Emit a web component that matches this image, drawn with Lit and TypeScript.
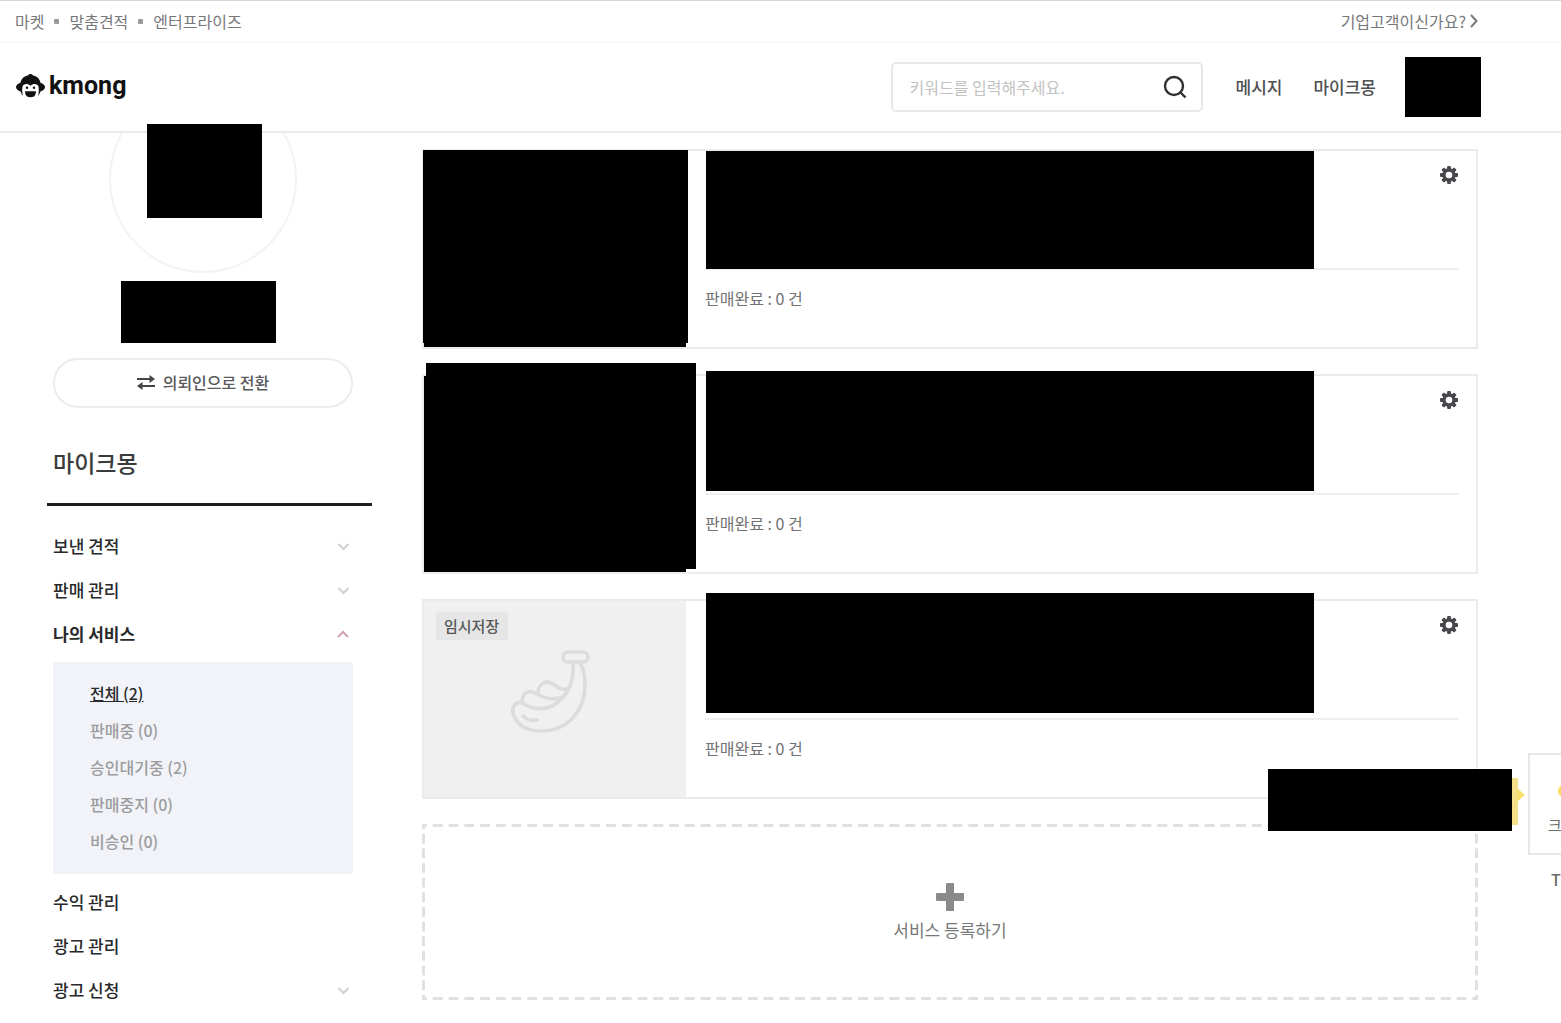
import { LitElement, html, css, svg, nothing } from "lit";
import { customElement, property } from "lit/decorators.js";

interface MenuEntry {
  label: string;
  state: "closed" | "open" | "leaf";
}

const MENU_TOP: MenuEntry[] = [
  { label: "보낸 견적", state: "closed" },
  { label: "판매 관리", state: "closed" },
  { label: "나의 서비스", state: "open" },
];

const SUBMENU = ["전체 (2)", "판매중 (0)", "승인대기중 (2)", "판매중지 (0)", "비승인 (0)"];

const MENU_BOTTOM: MenuEntry[] = [
  { label: "수익 관리", state: "leaf" },
  { label: "광고 관리", state: "leaf" },
  { label: "광고 신청", state: "closed" },
];

const GEAR_TEETH = [0, 45, 90, 135, 180, 225, 270, 315];

@customElement("kmong-header")
class KmongHeader extends LitElement {
  static styles = css`
    :host { display: block; }
    a { color: inherit; text-decoration: none; }
    .topbar {
      display: flex;
      justify-content: space-between;
      align-items: center;
      height: 40px;
      padding: 0 83px 0 15px;
      border-top: 1px solid #d6d6d6;
      border-bottom: 2px solid #f8f8f8;
      font-size: 16px;
      color: #77787a;
    }
    .markets { display: flex; align-items: center; gap: 10px; }
    .dot { width: 5px; height: 5px; border-radius: 1px; background: #9a9a9a; }
    .business { display: flex; align-items: center; gap: 4px; }
    .bar {
      display: flex;
      align-items: center;
      height: 88px;
      padding: 0 80px 0 16px;
      border-bottom: 2px solid #ebebeb;
    }
    .logo {
      display: flex;
      align-items: center;
      gap: 4px;
      margin-right: auto;
      padding-bottom: 2px;
      color: #111;
      font: 700 25px/32px Roboto, "Noto Sans", sans-serif;
    }
    .search {
      display: flex;
      align-items: center;
      box-sizing: border-box;
      width: 312px;
      height: 50px;
      padding: 0 14px 0 17px;
      border: 2px solid #e8e8e8;
      border-radius: 5px;
    }
    .search input {
      flex: 1;
      min-width: 0;
      padding: 0;
      border: 0;
      outline: 0;
      background: none;
      font: inherit;
      font-size: 16px;
    }
    .search input::placeholder { color: #c2c2c2; opacity: 1; }
    .search button { display: flex; padding: 0; border: 0; background: none; }
    .links {
      display: flex;
      gap: 31px;
      margin: 0 29px 0 33px;
      font-size: 17px;
      font-weight: 500;
      color: #505153;
    }
    .account { width: 76px; height: 60px; background: #000; }
  `;

  render() {
    return html`
      <nav class="topbar">
        <div class="markets">
          <a href="#">마켓</a><span class="dot"></span>
          <a href="#">맞춤견적</a><span class="dot"></span>
          <a href="#">엔터프라이즈</a>
        </div>
        <a class="business" href="#">기업고객이신가요?
          <svg width="8" height="14" viewBox="0 0 8 14" fill="none" stroke="#77787a" stroke-width="2"><path d="M1 1l5.500 6L1 13" /></svg>
        </a>
      </nav>
      <header class="bar">
        <a class="logo" href="#">
          <svg width="29" height="24" viewBox="0 0 29 24">
            <path fill="#111" d="M14.500 0c1.200 0 2 .6 2.300 1.300 4 .8 6.900 3.500 7.700 7.400C27 9.500 29 11 29 13s-2 3.700-4.600 4.500c-.5 1.700-1.200 3-2.400 4.200C23 19 23 15.500 22.500 12.500c-.7-3.200-5.500-3.500-8-.7-2.500-2.800-7.300-2.500-8 .7C6 15.500 6 19 7 21.700c-1.200-1.200-1.900-2.500-2.400-4.200C2 16.700 0 15 0 13s2-3.500 4.500-4.300c.8-3.900 3.700-6.600 7.700-7.400C12.500.6 13.300 0 14.500 0z" />
            <circle fill="#111" cx="11" cy="13.800" r="1.200" />
            <circle fill="#111" cx="18" cy="13.800" r="1.200" />
            <path fill="#111" d="M9 17.200h11c0 2.200-.8 4-2 5.300-2 .9-5 .9-7 0-1.200-1.300-2-3.100-2-5.300z" />
          </svg>
          <span>kmong</span>
        </a>
        <form class="search" role="search">
          <input type="search" aria-label="검색" placeholder="키워드를 입력해주세요." />
          <button type="button" aria-label="검색">
            <svg width="24" height="24" viewBox="0 0 24 24" fill="none" stroke="#303133" stroke-width="2.400"><circle cx="11" cy="11" r="9" /><path d="M17.500 17.500l5 5" /></svg>
          </button>
        </form>
        <nav class="links"><a href="#">메시지</a><a href="#">마이크몽</a></nav>
        <div class="account"></div>
      </header>
    `;
  }
}

@customElement("kmong-sidebar")
class KmongSidebar extends LitElement {
  static styles = css`
    :host { display: block; }
    a { color: inherit; text-decoration: none; }
    .inner { padding: 0 19px 0 6px; }
    .profile {
      position: relative;
      display: flex;
      flex-direction: column;
      align-items: center;
    }
    .avatar-window {
      display: flex;
      align-items: flex-end;
      height: 140px;
      overflow: hidden;
    }
    .avatar {
      box-sizing: border-box;
      width: 188px;
      height: 188px;
      flex: none;
      border: 2px solid #f3f3f3;
      border-radius: 50%;
    }
    .photo {
      position: absolute;
      top: -9px;
      left: 100px;
      width: 115px;
      height: 94px;
      background: #000;
    }
    .name { width: 155px; height: 62px; margin: 8px 9px 15px 0; background: #000; }
    .switch {
      display: flex;
      justify-content: center;
      align-items: center;
      gap: 8px;
      box-sizing: border-box;
      width: 100%;
      height: 50px;
      padding: 0 0 2px;
      border: 2px solid #ececec;
      border-radius: 25px;
      background: #fff;
      font: inherit;
      font-size: 16px;
      font-weight: 500;
      color: #58595b;
    }
    .title {
      margin: 36px 0 0;
      padding: 0 6px 23px;
      border-bottom: 3px solid #1d1d1f;
      font-size: 23px;
      line-height: 36px;
      font-weight: 500;
      color: #3a3b3d;
    }
    .menu { padding-top: 18px; }
    .row {
      display: flex;
      justify-content: space-between;
      align-items: center;
      height: 44px;
      padding-right: 3px;
      font-size: 17px;
      font-weight: 500;
      color: #28292b;
    }
    .row.open { font-weight: 700; }
    .sub {
      display: flex;
      flex-direction: column;
      margin: 6px 0;
      padding: 13px 37px 14px;
      border-radius: 3px;
      background: #f2f3f8;
      font-size: 16px;
      line-height: 37px;
      font-weight: 500;
      color: #9b9c9e;
      list-style: none;
    }
    .current { color: #28292b; text-decoration: underline; }
  `;

  private row(entry: MenuEntry) {
    const open = entry.state === "open";
    return html`
      <a class="row ${entry.state}" href="#">
        <span>${entry.label}</span>
        ${entry.state === "leaf"
          ? nothing
          : html`<svg width="13" height="9" viewBox="0 0 13 9" fill="none" stroke=${open ? "#d0a0b4" : "#cfcfcf"} stroke-width="2">
              <path d=${open ? "M1 7L6 2l5 5" : "M1.500 2l5 5 5-5"} />
            </svg>`}
      </a>
    `;
  }

  render() {
    return html`
      <div class="inner profile">
        <div class="avatar-window"><div class="avatar"></div></div>
        <div class="photo"></div>
        <div class="name"></div>
        <button class="switch" type="button">
          <svg width="18" height="15" viewBox="0 0 18 15" fill="#444547">
            <path d="M0 3h12.500V0L18 4l-5.500 4V5H0zM18 10H5.500V7L0 11l5.500 4v-3H18z" />
          </svg>
          의뢰인으로 전환
        </button>
      </div>
      <h2 class="title">마이크몽</h2>
      <nav class="inner menu">
        ${MENU_TOP.map((entry) => this.row(entry))}
        <ul class="sub">
          ${SUBMENU.map((label, i) => html`<li><a class=${i === 0 ? "current" : ""} href="#">${label}</a></li>`)}
        </ul>
        ${MENU_BOTTOM.map((entry) => this.row(entry))}
      </nav>
    `;
  }
}

@customElement("service-card")
class ServiceCard extends LitElement {
  @property() variant = "first";

  static styles = css`
    :host { display: block; }
    .card {
      position: relative;
      display: flex;
      box-sizing: border-box;
      height: 200px;
      border: 2px solid #ebebeb;
    }
    .media {
      display: flex;
      justify-content: center;
      align-items: center;
      flex: none;
      width: 262px;
      background: #000;
    }
    .draft .media { background: #f0f0f0; }
    .banana { margin: -18px 0 0 -10px; }
    .badge {
      position: absolute;
      top: 11px;
      left: 12px;
      padding: 0 9px 0 8px;
      background: #e6e6e6;
      font-size: 15px;
      line-height: 28px;
      font-weight: 500;
      color: #555658;
    }
    .body { flex: 1; padding: 0 17px 0 19px; }
    .summary {
      display: flex;
      justify-content: flex-end;
      height: 117px;
      border-bottom: 2px solid #eeeeee;
    }
    .settings {
      display: flex;
      width: 20px;
      height: 20px;
      margin-top: 14px;
      padding: 1px;
      border: 0;
      background: none;
    }
    .sold { margin: 0; padding-top: 12px; font-size: 16px; line-height: 32px; color: #717274; }
    .cover { position: absolute; background: #000; }
    .first .cover-media { top: -1px; left: -1px; width: 265px; height: 193px; }
    .second .cover-media { top: -13px; left: 2px; width: 270px; height: 206px; }
    .cover-text { left: 282px; width: 608px; }
    .first .cover-text { top: 0; height: 118px; }
    .second .cover-text { top: -5px; height: 120px; }
    .draft .cover-text { top: -8px; height: 120px; }
  `;

  render() {
    const draft = this.variant === "draft";
    return html`
      <article class="card ${this.variant}">
        <div class="media">
          ${draft
            ? html`<svg class="banana" width="82" height="86" viewBox="0 0 82 86" fill="none" stroke="#dcdcdc" stroke-width="3.600" stroke-linejoin="round" stroke-linecap="round">
                <rect x="54" y="5" width="25" height="10" rx="5" />
                <path d="M64 16C65 32 60 45 51 53C41 64 26 64 13 56C6 54 3 60 4 66C7 78 18 84 32 84C60 84 77 62 76 35C76 28 74 21 71 16" />
                <path d="M13 56C13 45 20 42 28 47C37 52 44 53 51 51" />
                <path d="M29 46C29 36 38 33 44 37C49 41 53 43 57 42" />
                <path d="M14 69C18 73 23 74 28 73" />
              </svg>
              <span class="badge">임시저장</span>`
            : html`<span class="cover cover-media"></span>`}
        </div>
        <div class="body">
          <div class="summary">
            <button class="settings" type="button" aria-label="설정">
              <svg width="18" height="18" viewBox="-9 -9 18 18">
                ${GEAR_TEETH.map((angle) => svg`<rect x="-1.900" y="-9" width="3.800" height="5" rx="1" fill="#47484b" transform=${`rotate(${angle})`} />`)}
                <circle r="5" fill="none" stroke="#47484b" stroke-width="3.400" />
              </svg>
            </button>
          </div>
          <p class="sold">판매완료 : 0 건</p>
        </div>
        <span class="cover cover-text"></span>
      </article>
    `;
  }
}

@customElement("app-root")
class AppRoot extends LitElement {
  static styles = css`
    :host {
      position: relative;
      display: block;
      min-height: 100vh;
      overflow: hidden;
      background: #fff;
      font-family: "Noto Sans CJK KR", sans-serif;
      line-height: 24px;
    }
    .page {
      display: grid;
      grid-template-columns: 325px minmax(0, 1fr);
      gap: 50px;
      padding: 0 83px 0 47px;
    }
    .services {
      display: flex;
      flex-direction: column;
      gap: 25px;
      padding-top: 16px;
    }
    .register {
      --dash: #e0e0e0 0 5px, transparent 5px calc(100% - 5px), #e0e0e0 calc(100% - 5px);
      display: flex;
      flex-direction: column;
      justify-content: center;
      align-items: center;
      gap: 7px;
      height: 176px;
      padding: 0;
      border: 0;
      background:
        linear-gradient(90deg, var(--dash)) 0 0 / calc(100% / 67) 3px,
        linear-gradient(90deg, var(--dash)) 0 100% / calc(100% / 67) 3px,
        linear-gradient(180deg, var(--dash)) 0 0 / 3px 15px,
        linear-gradient(180deg, var(--dash)) 100% 0 / 3px 15px;
      background-repeat: repeat-x, repeat-x, no-repeat round, no-repeat round;
      font: inherit;
      font-size: 17px;
      color: #77787a;
    }
    .bubble {
      position: absolute;
      top: 778px;
      right: 43px;
      width: 240px;
      height: 47px;
      background: #f5e08a;
    }
    .arrow { position: absolute; top: 10px; right: -7px; }
    .notice {
      position: absolute;
      top: 769px;
      right: 49px;
      width: 244px;
      height: 62px;
      background: #000;
    }
    .quick {
      position: absolute;
      top: 753px;
      right: 0;
      width: 33px;
      color: #6b6c6e;
      font-size: 15px;
      overflow: hidden;
    }
    .talk {
      display: flex;
      flex-direction: column;
      justify-content: flex-end;
      box-sizing: border-box;
      height: 102px;
      padding: 0 0 16px 18px;
      border: 2px solid #e8e8e8;
      border-right: 0;
      color: inherit;
      text-decoration: none;
    }
    .spark { align-self: flex-end; margin-bottom: 16px; }
    .top {
      display: block;
      padding: 12px 0 0 23px;
      border: 0;
      background: none;
      font: 500 16px/24px "Noto Sans CJK KR", sans-serif;
      color: inherit;
    }
  `;

  render() {
    return html`
      <kmong-header></kmong-header>
      <div class="page">
        <kmong-sidebar></kmong-sidebar>
        <main class="services">
          <service-card variant="first"></service-card>
          <service-card variant="second"></service-card>
          <service-card variant="draft"></service-card>
          <button class="register" type="button">
            <svg width="28" height="28" viewBox="0 0 28 28" fill="#8a8a8c"><path d="M11 0h6q1 0 1 1v9h9q1 0 1 1v6q0 1-1 1h-9v9q0 1-1 1h-6q-1 0-1-1v-9H1q-1 0-1-1v-6q0-1 1-1h9V1q0-1 1-1z" /></svg>
            서비스 등록하기
          </button>
        </main>
      </div>
      <div class="bubble">
        <svg class="arrow" width="8" height="14" viewBox="0 0 8 14" fill="#f8e070"><path d="M0 0l8 7-8 7z" /></svg>
      </div>
      <div class="notice"></div>
      <aside class="quick">
        <a class="talk" href="#">
          <svg class="spark" width="3" height="12" viewBox="0 0 3 12"><circle cx="6" cy="6" r="6" fill="#f8df5c" /></svg>
          <span>크</span>
        </a>
        <button class="top" type="button">T</button>
      </aside>
    `;
  }
}
